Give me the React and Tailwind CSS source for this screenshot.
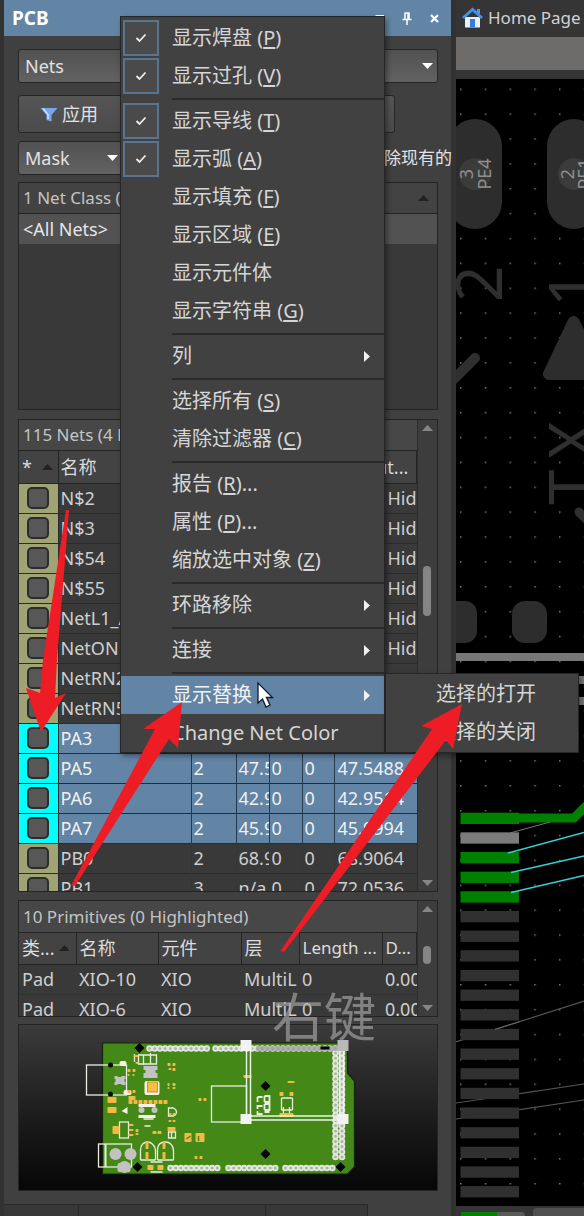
import React from "react";

const MENU = [
  { label: "显示焊盘", hotkey: "P", checked: true },
  { label: "显示过孔", hotkey: "V", checked: true },
  null,
  { label: "显示导线", hotkey: "T", checked: true },
  { label: "显示弧", hotkey: "A", checked: true },
  { label: "显示填充", hotkey: "F" },
  { label: "显示区域", hotkey: "E" },
  { label: "显示元件体" },
  { label: "显示字符串", hotkey: "G" },
  null,
  { label: "列", sub: true },
  null,
  { label: "选择所有", hotkey: "S" },
  { label: "清除过滤器", hotkey: "C" },
  null,
  { label: "报告", hotkey: "R", more: true },
  { label: "属性", hotkey: "P", more: true },
  { label: "缩放选中对象", hotkey: "Z" },
  null,
  { label: "环路移除", sub: true },
  null,
  { label: "连接", sub: true },
  null,
  { label: "显示替换", sub: true, active: true },
  { label: "Change Net Color" },
];

const NETS = [
  ["N$2"], ["N$3"], ["N$54"], ["N$55"], ["NetL1_A"], ["NetON"], ["NetRN2"], ["NetRN5"],
  ["PA3"],
  ["PA5", "2", "47.5", "0", "0", "47.5488"],
  ["PA6", "2", "42.9", "0", "0", "42.9514"],
  ["PA7", "2", "45.9", "0", "0", "45.9994"],
  ["PB0", "2", "68.9", "0", "0", "68.9064"],
  ["PB1", "3", "n/a", "0", "0", "72.0536"],
];

const PRIMITIVES = [
  ["Pad", "XIO-10", "XIO", "MultiL", "0", "0.00"],
  ["Pad", "XIO-6", "XIO", "MultiL", "0", "0.00"],
];

function Triangle({ dir = "down", className = "" }) {
  const d = { down: "M0 0H11L5.500 6Z", up: "M0 6H11L5.500 0Z", right: "M0 0L6 5.500L0 11Z" }[dir];
  const right = dir === "right";
  return (
    <svg width={right ? 6 : 11} height={right ? 11 : 6} className={className} fill="currentColor" aria-hidden="true">
      <path d={d} />
    </svg>
  );
}

function TitleBar() {
  return (
    <header className="flex h-9 items-center bg-[#6284a5] pl-2 pr-3 text-white">
      <h1 className="flex-1 text-[19px] font-bold leading-6">PCB</h1>
      <div className="flex items-center gap-[18px]">
        <button aria-label="Panel menu"><Triangle className="block w-[9px]" /></button>
        <button aria-label="Pin panel">
          <svg width="10" height="13" viewBox="0 0 10 13" className="block" fill="none" stroke="#fff" strokeWidth="1.500">
            <path d="M2.500 1H7.500M3 1V7M0.500 7.500H9.500M5 8V13" /><path d="M6.500 1V7" strokeWidth="2.500" />
          </svg>
        </button>
        <button aria-label="Close panel">
          <svg width="9" height="9" viewBox="0 0 9 9" className="block" stroke="#fff" strokeWidth="2.200"><path d="M1 1L8 8M8 1L1 8" /></svg>
        </button>
      </div>
    </header>
  );
}

function Select({ label, value, className = "" }) {
  return (
    <div className={"relative " + className}>
      <select aria-label={label} className="h-[34px] w-full appearance-none rounded-[3px] border border-[#262626] bg-linear-to-b from-[#515151] to-[#626262] pl-[6px] text-[18px] text-[#e2e2e2]">
        <option>{value}</option>
      </select>
      <Triangle className="pointer-events-none absolute right-[5px] top-[14px] text-white" />
    </div>
  );
}

function ActionButton({ children }) {
  return (
    <button className="flex h-[38px] items-center rounded-[3px] border border-[#262626] bg-linear-to-b from-[#555] to-[#4b4b4b] pl-[21px] text-[18px] text-[#e2e2e2]">
      {children}
    </button>
  );
}

function NetClasses() {
  return (
    <section className="mt-[7px] flex h-[228px] flex-col border border-[#242424] bg-[#393939]">
      <div className="flex h-[31px] items-center border-b border-[#242424] bg-[#434343] pl-1 pr-2">
        <h2 className="flex-1 text-[17px] text-[#c4c4c4]">1 Net Class (0 Highlighted)</h2>
        <Triangle dir="up" className="text-[#222]" />
      </div>
      <div className="flex h-[30px] items-center bg-[#525252] pl-1 text-[18px] text-[#e6e6e6]">&lt;All Nets&gt;</div>
    </section>
  );
}

function ScrollBar({ thumb }) {
  return (
    <div className="flex w-5 shrink-0 flex-col items-center border-l border-[#2d2d2d] bg-[#3d3d3d] py-[5px] text-[#858585]">
      <Triangle dir="up" />
      <div className="relative w-full flex-1">
        <div className={"absolute left-[5px] w-2 rounded bg-[#858585] " + thumb} />
      </div>
      <Triangle />
    </div>
  );
}

function Swatch({ name, selected }) {
  return (
    <label className={"flex h-[29px] items-center justify-center " + (selected ? "bg-[#00ffff]" : "bg-[#a0a373]")}>
      <input type="checkbox" aria-label={name} className="size-[22px] appearance-none rounded-[5px] border-2 border-[#2c2c2c] bg-[#575757]" />
    </label>
  );
}

function Nets() {
  return (
    <section className="mt-[9px] flex h-[473px] overflow-hidden border border-[#242424] bg-[#393939] text-[#cfcfcf]">
      <div className="min-w-0 flex-1 overflow-hidden">
        <h2 className="flex h-[31px] items-center border-b border-[#242424] bg-[#474747] pl-1 text-[17px] text-[#c4c4c4]">115 Nets (4 Highlighted)</h2>
        <table className="w-full table-fixed border-collapse text-left text-[18px] leading-6">
          <colgroup>
            <col className="w-[39px]" /><col className="w-[133px]" /><col className="w-[45px]" />
            <col className="w-[33px]" /><col className="w-[33px]" /><col className="w-8" /><col />
          </colgroup>
          <thead>
            <tr className="h-8 border-b border-[#242424] bg-[#434343] text-[#dcdcdc]">
              <th className="border-r border-[#242424] p-0 pl-[3px] font-normal">
                <span className="flex items-center gap-[10px]">*<Triangle dir="up" className="text-[#222]" /></span>
              </th>
              <th className="p-0 pl-[2px] font-normal">名称</th>
              <th /><th /><th /><th />
              <th className="border-r border-[#242424] p-0 pr-2 text-right font-normal">Unrout...</th>
            </tr>
          </thead>
          <tbody>
            {NETS.map((row, i) => {
              const selected = row[0].startsWith("PA");
              return (
                <tr key={row[0]} className={"h-[30px] border-b border-[#2b2b2b] " + (selected ? "bg-[#6284a5] text-[#f0f0f0]" : "")}>
                  <td className="border-r border-[#2b2b2b] p-0"><Swatch name={row[0]} selected={selected} /></td>
                  {[0, 1, 2, 3, 4].map((c) => (
                    <td key={c} className={"overflow-hidden whitespace-nowrap border-r p-0 pl-[2px] " + (selected ? "border-[#26384a]" : "border-[#363636]")}>{row[c]}</td>
                  ))}
                  <td className={"overflow-hidden whitespace-nowrap p-0 pl-[3px] " + (i < 6 ? "text-right" : "")}>{i < 6 ? "Hid" : row[5]}</td>
                </tr>
              );
            })}
          </tbody>
        </table>
      </div>
      <ScrollBar thumb="top-[135px] h-[50px]" />
    </section>
  );
}

function Primitives() {
  const heads = ["类...", "名称", "元件", "层", "Length ...", "D..."];
  return (
    <section className="mt-2 flex h-[117px] overflow-hidden border border-[#242424] bg-[#393939] text-[#cfcfcf]">
      <div className="min-w-0 flex-1 overflow-hidden">
        <h2 className="flex h-8 items-center border-b border-[#242424] bg-[#474747] pl-1 text-[17px] text-[#c4c4c4]">10 Primitives (0 Highlighted)</h2>
        <table className="w-full table-fixed border-collapse text-left text-[18px] leading-6">
          <colgroup>
            <col className="w-[57px]" /><col className="w-[82px]" /><col className="w-[83px]" />
            <col className="w-[58px]" /><col className="w-[83px]" /><col />
          </colgroup>
          <thead>
            <tr className="h-[31px] border-b border-[#242424] bg-[#434343] text-[#dcdcdc]">
              {heads.map((h, i) => (
                <th key={h} className="whitespace-nowrap border-r border-[#242424] p-0 pl-[3px] font-normal">
                  <span className={"flex items-center justify-between pr-[7px] " + (i > 3 ? "text-[17px]" : "")}>{h}{i === 0 && <Triangle dir="up" className="w-[10px] text-[#222]" />}</span>
                </th>
              ))}
            </tr>
          </thead>
          <tbody>
            {PRIMITIVES.map((row) => (
              <tr key={row[1]} className="h-[30px] border-b border-[#333]">
                {row.map((v, c) => (
                  <td key={c} className="overflow-hidden whitespace-nowrap p-0 pl-[3px]">{v}</td>
                ))}
              </tr>
            ))}
          </tbody>
        </table>
      </div>
      <ScrollBar thumb="top-[34px] h-[18px]" />
    </section>
  );
}

function Cells({ x, y, n, vertical }) {
  return Array.from({ length: n }, (_, i) => (
    <circle key={i} cx={vertical ? x : x + i * 5.2} cy={vertical ? y + i * 5.2 : y} r="2.400" fill="#a9bb9b" stroke="#e6e6e6" strokeWidth="1.700" />
  ));
}

function BoardPreview() {
  const gold = [
    [107, 1097, 9, 6], [107, 1107, 9, 6], [112, 1126, 7, 8],
    [127, 1069, 3, 3], [132, 1069, 3, 3], [127, 1074, 2, 2], [132, 1074, 2, 2],
    [167, 1063, 3, 3], [172, 1063, 3, 3], [168, 1068, 3, 2], [172, 1068, 3, 3],
    [167, 1083, 2, 3], [172, 1083, 3, 3], [167, 1087, 2, 2], [172, 1087, 3, 2],
    [127, 1090, 3, 3], [132, 1090, 3, 3], [128, 1096, 7, 4],
    [168, 1113, 3, 2], [172, 1113, 3, 2], [168, 1120, 3, 2], [172, 1120, 3, 2],
    [167, 1127, 8, 4], [128, 1124, 5, 2], [128, 1129, 5, 2], [128, 1134, 5, 2],
    [135, 1129, 3, 3], [135, 1133, 3, 2], [152, 1131, 4, 3], [157, 1131, 4, 3],
    [184, 1133, 7, 9], [195, 1133, 9, 9], [194, 1156, 3, 3], [199, 1156, 3, 3],
    [145, 1141, 3, 8], [145, 1152, 3, 8], [162, 1141, 3, 8], [162, 1152, 3, 8],
    [147, 1165, 6, 5], [157, 1165, 6, 5], [198, 1098, 3, 3], [203, 1098, 3, 3],
    [243, 1075, 8, 3], [279, 1092, 4, 4], [289, 1092, 4, 4], [279, 1113, 14, 4], [287, 1081, 7, 2],
    [133, 1055, 5, 2], [135, 1062, 3, 2],
    [128, 1100, 4, 4], [133, 1100, 4, 4], [138, 1100, 4, 4], [143, 1100, 4, 4], [148, 1100, 4, 4], [153, 1100, 4, 4], [158, 1100, 4, 4], [163, 1100, 4, 4],
  ];
  return (
    <section aria-label="Board preview" className="mt-[7px] h-[167px] border border-[#242424] bg-linear-to-b from-[#3b3b3b] to-[#070707]">
      <svg viewBox="19 1025 417 165" className="size-full" aria-hidden="true">
        <path d="M102 1043H347V1073L354 1081V1167L347 1174H102Z" fill="#448817" stroke="#142408" strokeWidth="1.200" />
        <Cells x={149} y={1048.500} n={12} /><Cells x={215} y={1048.500} n={25} />
        <Cells x={170} y={1168} n={10} /><Cells x={228} y={1168} n={10} /><Cells x={285} y={1168} n={10} />
        <Cells x={335} y={1053} n={21} vertical /><Cells x={341.500} y={1053} n={21} vertical />
        <rect x="256" y="1046" width="86" height="5" fill="#9a9a9a" fillOpacity="0.700" />
        <rect x="320" y="1046.500" width="9" height="3" fill="#000" />
        <g fill="none" stroke="#e8efe2" strokeWidth="1.300">
          <rect x="86" y="1065" width="40" height="30" /><rect x="98" y="1144" width="33" height="23" /><path d="M105 1144V1167" strokeWidth="2" />
          <rect x="119" y="1122" width="9" height="16" /><rect x="211" y="1086" width="35" height="36" />
          <path d="M134 1054V1062M138 1055H156V1064H138ZM143 1055V1065M150 1053V1064" />
          <path d="M168 1108H173C177 1110 177 1114 173 1116H168ZM168 1132H175V1138H168ZM171 1132V1138" />
          <path d="M140 1160V1150C140 1144 144 1142 147 1142S155 1145 155 1151V1160M140 1160H155M157 1160V1150C157 1144 161 1142 165 1142S173 1145 173 1151V1160M157 1160H173" />
          <path d="M150 1162H162M150 1172H162M144 1126H150M143 1119H153" />
          <path d="M257 1097H262M264 1096H269V1102H264M257 1106H262M264 1104H269V1110H264M257 1114H262M264 1112H269M257 1097V1102M257 1105V1109M257 1111V1115M264 1096V1102M264 1104V1110" strokeWidth="1.800" />
          <path d="M281 1098H292M281 1098V1110M292 1098V1110M281 1110H292M283 1107V1114M289 1107V1114" />
        </g>
        <g fill="#c2c2c2">
          <path d="M143 1066H157V1070H155V1073H157V1078H143V1073H145V1070H143ZM114 1076H117V1077H121V1076H125V1079H124V1082H125V1085H121V1084H117V1085H114V1082H115V1079H114Z" />
          <circle cx="115" cy="1154" r="6" /><circle cx="130" cy="1154" r="6" /><circle cx="124" cy="1167" r="6" /><rect x="117" y="1163" width="13" height="9" rx="2" />
          <circle cx="141" cy="1110" r="3" /><circle cx="154" cy="1110" r="3" />
        </g>
        <g fill="#f7f2e6">
          <rect x="138" y="1104" width="17" height="3" /><rect x="138" y="1115" width="17" height="3" /><rect x="119" y="1061" width="7" height="5" rx="2" />
          <rect x="123" y="1090" width="8" height="5" rx="2" /><rect x="144" y="1081" width="15" height="14" rx="2" /><path d="M121 1111L127 1107V1114Z" />
        </g>
        <g fill="#f3b944">{gold.map(([x, y, w, h]) => <rect key={x + "-" + y} x={x} y={y} width={w} height={h} rx="0.800" />)}</g>
        <rect x="147" y="1082" width="10" height="10" fill="#f6bf43" stroke="#d18d22" />
        <path d="M186 1139L190 1136M198 1136V1141" stroke="#448817" strokeWidth="1.500" />
        <g fill="#050505">
          {[[139, 1048], [137, 1167], [265, 1086], [265, 1154], [340, 1167]].map(([x, y]) => <path key={x + "-" + y} d={`M${x} ${y - 5}L${x + 5} ${y}L${x} ${y + 5}L${x - 5} ${y}Z`} />)}
          <circle cx="110" cy="1065" r="2.500" /><circle cx="110" cy="1094" r="2.500" />
        </g>
        <path d="M246 1046V1118M250 1046V1116M246 1116H343M246 1120H343M339 1048V1116M343 1048V1118" fill="none" stroke="#eef3ea" strokeWidth="1.400" />
        <g fill="#f2f2f2">
          <rect x="240" y="1040" width="11" height="11" /><rect x="240" y="1114" width="11" height="10" /><rect x="337" y="1114" width="11" height="10" />
          <rect x="337" y="1040" width="11" height="11" fill="#b9b9b9" />
        </g>
      </svg>
    </section>
  );
}

function ContextMenu() {
  return (
    <div role="menu" className="absolute left-[120px] top-4 w-[265px] border border-[#262626] bg-[#414141] pt-[2px] text-[20px] text-[#d6d6d6] shadow-[2px_3px_5px_rgba(0,0,0,0.4)]">
      {MENU.map((item, i) =>
        item === null ? (
          <div key={i} role="separator" className="ml-[51px] flex h-[7px] items-center"><div className="h-[2px] w-full bg-[#2a2a2a]" /></div>
        ) : (
          <button
            key={i}
            role="menuitem"
            className={"flex h-[38px] w-full items-center pl-[2px] pr-[14px] text-left " + (item.active ? "bg-[#6284a5] text-[#f2f2f2]" : "")}
          >
            <span className={"flex h-9 w-9 shrink-0 items-center justify-center " + (item.checked ? "border-2 border-[#587590] bg-[#4a4a4a]" : "")}>
              {item.checked && (
                <svg width="12" height="10" viewBox="0 0 12 10" fill="none" stroke="#eee" strokeWidth="1.800"><path d="M1.500 5L4.500 8L10.500 1.500" /></svg>
              )}
            </span>
            <span className="flex-1 whitespace-nowrap pl-[13px]">
              {item.label}
              {item.hotkey && <> (<u className="underline-offset-2">{item.hotkey}</u>)</>}
              {item.more && "..."}
            </span>
            {item.sub && <Triangle dir="right" className="text-[#f2f2f2]" />}
          </button>
        )
      )}
      <div role="menu" className="absolute left-[264px] top-[656px] w-[194px] border border-[#262626] bg-[#414141] py-px shadow-[2px_3px_5px_rgba(0,0,0,0.4)]">
        <button role="menuitem" className="flex h-[38px] w-full items-center whitespace-nowrap pl-[50px]">选择的打开</button>
        <button role="menuitem" className="flex h-[38px] w-full items-center whitespace-nowrap pl-[50px]">选择的关闭</button>
      </div>
    </div>
  );
}

function Canvas() {
  const pads = Array.from({ length: 20 }, (_, i) => (i === 1 ? "#7b7b7b" : i < 5 ? "#008000" : "#303030"));
  return (
    <svg width="100%" className="block min-h-0 flex-1 bg-black font-['Noto_Sans',sans-serif]" aria-label="PCB canvas">
      <defs>
        <pattern id="dots" width="24.750" height="24.875" patternUnits="userSpaceOnUse" x="460" y="88.500">
          <rect width="1.500" height="1.500" fill="#777" />
        </pattern>
      </defs>
      <g transform="translate(-456 -79)">
        <rect x="456" y="79" width="3000" height="1200" fill="url(#dots)" />
        <g fill="#2d2d2d">
          <rect x="448" y="119" width="54" height="110" rx="27" /><rect x="547" y="119" width="54" height="110" rx="27" />
          <rect x="443" y="601" width="34" height="42" rx="12" /><rect x="512" y="601" width="35" height="42" rx="13" />
          <path d="M573.500 322L549 374H600Z" stroke="#2d2d2d" strokeWidth="12" strokeLinejoin="round" />
        </g>
        <g fill="#3b3b3b"><circle cx="475" cy="174" r="16" /><circle cx="574" cy="174" r="16" /></g>
        <g fill="#8f8f8f" fontSize="18" textAnchor="middle">
          <text transform="translate(473 174) rotate(-90)">3</text><text transform="translate(491 174) rotate(-90)">PE4</text>
          <text transform="translate(574 174) rotate(-90)">2</text><text transform="translate(591 174) rotate(-90)">PE1</text>
        </g>
        <g stroke="#2f2f2f" strokeLinecap="round"><path d="M454 379L475 358" strokeWidth="10" /><path d="M579 512L600 533" strokeWidth="9" /></g>
        <g fill="#2f2f2f" fontSize="64">
          <text transform="translate(502 302) rotate(-90)">2</text>
          <text transform="translate(595 307) rotate(-90)">1</text>
          <text transform="translate(595 505) rotate(-90)">T</text><text transform="translate(595 459) rotate(-90)">X</text>
        </g>
        <g fill="#777"><rect x="456" y="653" width="3000" height="8" /><rect x="456" y="676" width="3000" height="8" /><rect x="456" y="697" width="3000" height="8" /></g>
        <path d="M456 1042L584 1001M456 1103L584 1084M456 1119L584 1100" stroke="#555" strokeWidth="1.200" />
        {pads.map((fill, i) => <rect key={i} x="460.500" y={812.7 + i * 19.65} width="58.500" height="11.300" fill={fill} />)}
        <path d="M519 818H574L590 802" fill="none" stroke="#008000" strokeWidth="9" />
        <path d="M510 833L550 822" stroke="#777" /><path d="M495 1029.500L520 1021.500" stroke="#666" />
        <path d="M508 853L584 832.500M511 872.500L584 856M511 892.500L584 875.500" stroke="#35cfd6" strokeWidth="1.600" />
      </g>
    </svg>
  );
}

function Editor() {
  return (
    <main className="flex min-w-0 flex-col overflow-hidden bg-[#363535]">
      <a href="#home" className="flex h-[35px] items-center gap-[5px] whitespace-nowrap pl-[6px] text-[17px] text-[#d2d2d2]">
        <svg width="21" height="21" viewBox="0 0 21 21" className="shrink-0" aria-hidden="true">
          <path d="M3 10H18V20.500H3Z" fill="#e6effb" /><path d="M15 2H18V7H15Z" fill="#4f97e8" />
          <path d="M1 11L10.500 2.500L20 11" fill="none" stroke="#3f92ea" strokeWidth="3" /><rect x="8" y="12" width="5" height="8.500" fill="#2f7fe0" />
        </svg>
        Home Page
      </a>
      <div className="mb-[9px] mt-[2px] h-[33px] bg-[#6e6c6a]" />
      <Canvas />
      <div className="flex h-[10px] items-end pl-[5px]">
        <div className="h-1 w-9 bg-[#008000]" /><div className="mr-2 h-1 w-7 rounded-tr bg-[#5a5a5a]" />
        <div className="h-2 flex-1 rounded-tl bg-[#505050]" />
      </div>
    </main>
  );
}

function PanelTabs() {
  const tab = "overflow-hidden whitespace-nowrap border-r border-t border-[#292929] bg-[#383838] px-2 pt-[5px] text-left text-[16px] leading-6 ";
  return (
    <nav className="mt-[13px] flex h-3 items-start overflow-hidden pr-[29px] text-[#aaa]">
      <button className={tab + "w-[75px]"}>Projects</button>
      <button className={tab + "w-[187px]"}>View Configuration</button>
      <button className={tab + "w-[102px]"}>Libraries</button>
      <button className="w-[53px] shrink-0 px-2 pt-[6px] text-left text-[16px] leading-6">PCB</button>
    </nav>
  );
}

function Annotations() {
  return (
    <svg className="pointer-events-none absolute inset-0 size-full" aria-hidden="true">
      <path d="M258 683V703L262.500 699L266 707L270 705L266.500 697.500H272.500Z" fill="#fff" stroke="#111830" strokeWidth="1.300" />
      <g fill="#ee1c25">
        <path d="M66 510H69L57 660L55 698L66 693L41 732L26 688L40 693L43 660Z" />
        <path d="M71.500 885L155 729L143 729L182 702L178 748L169 739L75 886Z" />
        <path d="M280.500 951L432 729L421 726L462 704L453 749L446 740L284 952Z" />
      </g>
    </svg>
  );
}

export default function App() {
  return (
    <div className="relative grid grid-cols-[minmax(0,456px)_minmax(128px,1fr)] overflow-hidden bg-[#323232] font-['Noto_Sans','Noto_Sans_CJK_SC',sans-serif]">
      <aside className="min-w-0 pl-1">
        <div className="mr-[5px] bg-[#404040]">
          <TitleBar />
          <div className="pl-[14px] pr-[13px] pt-[13px]">
            <Select label="Mode" value="Nets" />
            <div className="mr-[43px] mt-3 grid grid-cols-3">
              <ActionButton>
                <svg width="18" height="15" viewBox="0 0 18 15" className="mr-1" aria-hidden="true">
                  <path d="M0.500 1H17.500L11.500 8V14.500L6.500 13V8Z" fill="#78a7f2" /><path d="M3 1.500L8 7.500V12" stroke="#cfe1ff" strokeWidth="1.500" fill="none" />
                </svg>
                应用
              </ActionButton>
              <ActionButton>清除</ActionButton>
              <ActionButton>缩放</ActionButton>
            </div>
            <div className="-mr-[14px] mt-[8px] flex items-center justify-between">
              <Select label="Mask mode" value="Mask" className="w-[105px]" />
              <label className="flex items-center gap-1 whitespace-nowrap text-[17px] text-[#e2e2e2]">
                <input type="checkbox" className="size-4 appearance-none border border-[#262626] bg-[#555]" />清除现有的
              </label>
            </div>
            <NetClasses />
            <Nets />
            <Primitives />
            <BoardPreview />
          </div>
          <PanelTabs />
        </div>
      </aside>
      <Editor />
      <ContextMenu />
      <div className="pointer-events-none absolute left-[272px] top-[981px] whitespace-nowrap text-[52px] leading-[72px] text-[#a8a8a8]/65">右键</div>
      <Annotations />
    </div>
  );
}
